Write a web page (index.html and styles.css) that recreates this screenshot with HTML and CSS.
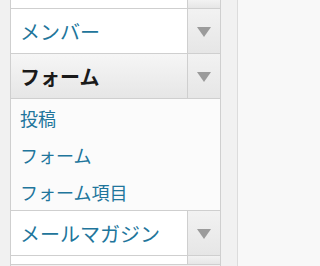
FILE: index.html
```html
<!DOCTYPE html>
<html lang="ja">
<head>
<meta charset="utf-8">
<link rel="stylesheet" href="styles.css">
</head>
<body>
<div class="page">
  <div class="menu">
    <div class="row row-partial">
      <div class="label"></div>
      <div class="toggle"></div>
    </div>
    <div class="row">
      <div class="label"><a class="link">メンバー</a></div>
      <div class="toggle"><svg class="arrow" width="14" height="10" viewBox="0 0 14 10"><polygon points="0,0 14,0 7,10" /></svg></div>
    </div>
    <div class="row row-open">
      <div class="label"><span class="title">フォーム</span></div>
      <div class="toggle"><svg class="arrow" width="14" height="10" viewBox="0 0 14 10"><polygon points="0,0 14,0 7,10" /></svg></div>
    </div>
    <ul class="submenu">
      <li class="subitem"><a class="link">投稿</a></li>
      <li class="subitem"><a class="link">フォーム</a></li>
      <li class="subitem"><a class="link">フォーム項目</a></li>
    </ul>
    <div class="row">
      <div class="label"><a class="link">メールマガジン</a></div>
      <div class="toggle"><svg class="arrow" width="14" height="10" viewBox="0 0 14 10"><polygon points="0,0 14,0 7,10" /></svg></div>
    </div>
    <div class="row row-partial">
      <div class="label"></div>
      <div class="toggle"></div>
    </div>
  </div>
  <div class="gutter"></div>
  <div class="edge"></div>
</div>
</body>
</html>
```

FILE: styles.css
```css
html, body {
  margin: 0;
  padding: 0;
  background: #f1f1f1;
  font-family: "Noto Sans CJK JP", "Noto Sans", sans-serif;
}
.page {
  display: flex;
  height: 266px;
  overflow: hidden;
  padding-left: 10px;
}
.menu {
  width: 209px;
  border-left: 1px solid #cfcfcf;
  border-right: 1px solid #cfcfcf;
  display: flex;
  flex-direction: column;
}
.row {
  display: flex;
  height: 44px;
  flex: none;
  border-bottom: 1px solid #cfcfcf;
  background: #fff;
}
.row-partial {
  height: 8px;
}
.label {
  flex: 1;
  display: flex;
  align-items: center;
  padding-left: 9px;
}
.toggle {
  width: 32px;
  border-left: 1px solid #cfcfcf;
  background: linear-gradient(#f2f2f2, #e6e6e6);
  display: flex;
  align-items: center;
  justify-content: center;
}
.arrow {
  fill: #9b9b9b;
  margin-top: 2px;
}
.row-open .label {
  background: linear-gradient(#f6f6f6, #e6e6e6);
}
.link {
  color: #21759b;
  font-size: 20px;
  text-decoration: none;
}
.title {
  color: #1a1a1a;
  font-size: 20px;
  font-weight: bold;
}
.submenu {
  list-style: none;
  margin: 0;
  padding: 0;
  flex: none;
  background: #fbfbfb;
  border-bottom: 1px solid #cfcfcf;
}
.subitem {
  height: 37px;
  display: flex;
  align-items: center;
  padding-left: 9px;
}
.subitem .link {
  font-size: 18px;
}
.gutter {
  width: 16px;
}
.edge {
  flex: 1;
  border-left: 1px solid #dcdcdc;
  background: #f8f8f8;
}
```
